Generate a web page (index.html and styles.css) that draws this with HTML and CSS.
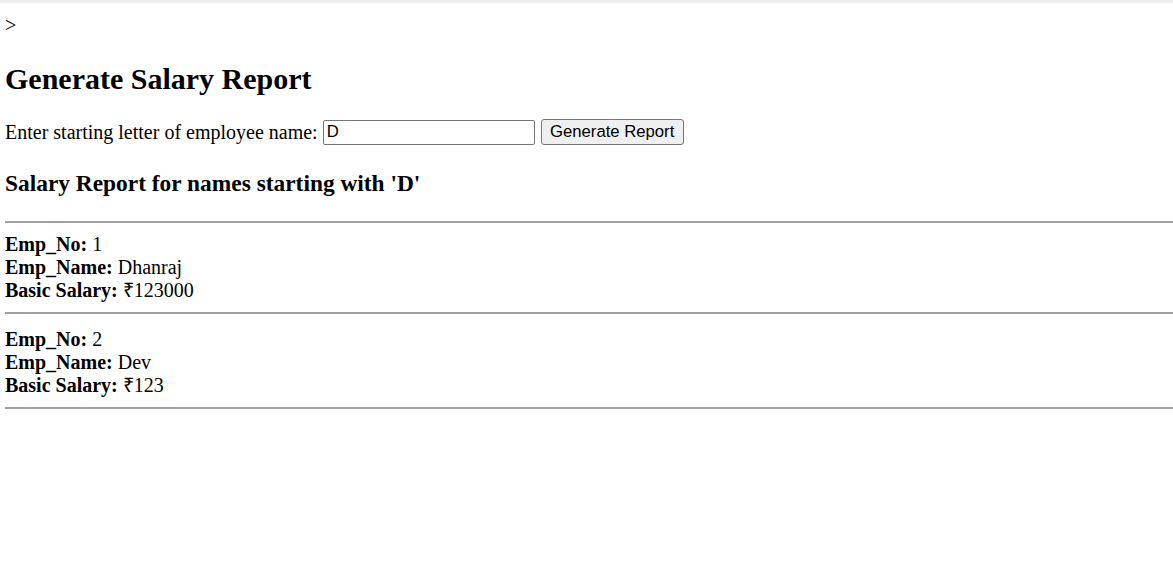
FILE: index.html
```html
<!DOCTYPE html>
<html>
<head>
<meta charset="utf-8">
<link rel="stylesheet" href="styles.css">
</head>
<body>
<div class="topband"></div>
<div class="page">
&gt;
<h2 class="title">Generate Salary Report</h2>
<form class="search">
  <label class="lbl">Enter starting letter of employee name:</label>
  <input class="field" type="text" value="D">
  <button class="btn" type="button">Generate Report</button>
</form>
<h3 class="subtitle">Salary Report for names starting with 'D'</h3>
<hr class="rule">
<div class="emp"><b>Emp_No:</b> 1<br><b>Emp_Name:</b> Dhanraj<br><b>Basic Salary:</b> ₹123000</div>
<hr class="rule">
<div class="emp emp-next"><b>Emp_No:</b> 2<br><b>Emp_Name:</b> Dev<br><b>Basic Salary:</b> ₹123</div>
<hr class="rule">
</div>
</body>
</html>
```
FILE: styles.css
```css
html, body {
  margin: 0;
  padding: 0;
  background: #fff;
}
body {
  font-family: "Liberation Serif", "Times New Roman", serif;
  font-size: 20px;
  color: #000;
}
.topband {
  height: 3px;
  background: #efefef;
}
.page {
  padding: 11px 0 0 5px;
}
.title {
  font-size: 30px;
  font-weight: bold;
  margin: 25px 0 23px;
}
.search {
  display: flex;
  align-items: center;
  gap: 6px;
  margin: 0;
}
.lbl {
  margin-right: -1px;
}
.field {
  width: 212px;
  height: 25px;
  box-sizing: border-box;
  border: 1px solid #767676;
  border-radius: 2px;
  font-family: "Liberation Sans", Arial, sans-serif;
  font-size: 16.7px;
  padding: 1px 3px;
  margin: 0;
}
.btn {
  width: 143px;
  height: 26px;
  box-sizing: border-box;
  border: 1px solid #767676;
  border-radius: 3px;
  background: #efefef;
  font-family: "Liberation Sans", Arial, sans-serif;
  font-size: 16.7px;
  padding: 0 6px;
  margin: 0;
}
.subtitle {
  font-size: 23.4px;
  font-weight: bold;
  margin: 25px 0 24px;
}
.rule {
  border: none;
  border-top: 2px solid #a0a0a0;
  margin: 10px 0;
}
.emp {
  line-height: 23px;
}
.emp-next {
  padding-top: 4px;
}
```
